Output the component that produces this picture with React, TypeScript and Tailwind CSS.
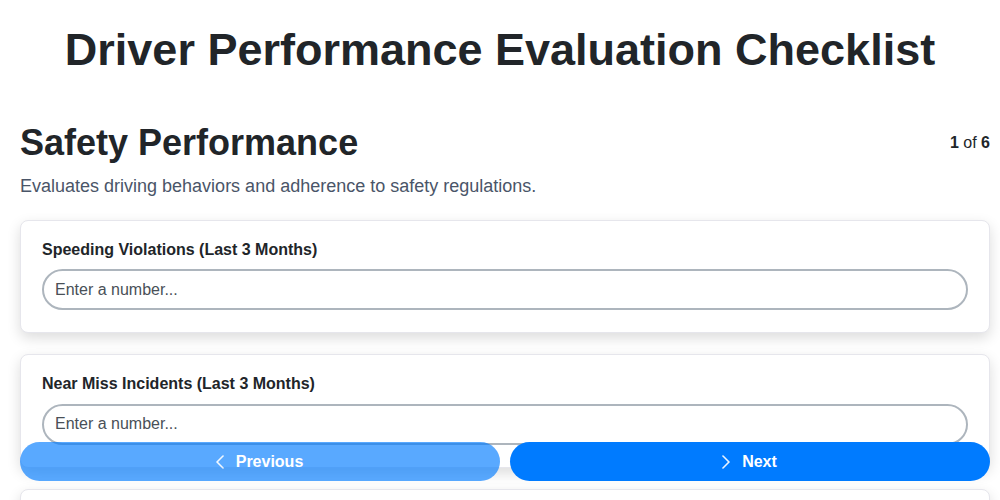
import React, { useState } from 'react';
import { BsChevronLeft, BsChevronRight } from 'react-icons/bs';

type Question = {
  id: string;
  label: string;
};

const questions: Question[] = [
  { id: 'speeding', label: 'Speeding Violations (Last 3 Months)' },
  { id: 'nearMiss', label: 'Near Miss Incidents (Last 3 Months)' },
  { id: 'harshBraking', label: 'Harsh Braking Events (Last 3 Months)' },
];

export default function App() {
  const [values, setValues] = useState<Record<string, string>>({});

  return (
    <div
      className="h-screen overflow-hidden bg-white pt-[23px] text-[#212529]"
      style={{ fontFamily: '"Liberation Sans", Arial, sans-serif' }}
    >
      <h1 className="text-center text-[45px] font-bold leading-[1.2]">
        Driver Performance Evaluation Checklist
      </h1>

      <div className="mr-[10px] ml-5">
        <div className="mt-[44px] flex items-center justify-between">
          <h2 className="text-[36px] font-bold leading-[1.2]">Safety Performance</h2>
          <span className="text-[16px]">
            <b>1</b> of <b>6</b>
          </span>
        </div>
        <p className="mt-[9px] text-[18px] leading-[1.5] text-[#4a5568]">
          Evaluates driving behaviors and adherence to safety regulations.
        </p>

        <div className="mt-[20px] flex flex-col gap-[21px]">
          {questions.map((q) => (
            <div
              key={q.id}
              className="rounded-lg border border-[#e6e6ec] bg-white px-[21px] pt-[19px] pb-[22px] shadow-[0_5px_14px_rgba(0,0,0,0.14)]"
            >
              <label htmlFor={q.id} className="mb-[10px] block text-[16px] font-bold leading-[1.2]">
                {q.label}
              </label>
              <input
                id={q.id}
                type="number"
                placeholder="Enter a number..."
                value={values[q.id] ?? ''}
                onChange={(e) => setValues({ ...values, [q.id]: e.target.value })}
                className="block h-[41px] w-full rounded-full border-2 border-[#adb5bd] bg-white px-[11px] text-[16px] text-[#212529] placeholder:text-[#495057] focus:outline-none"
              />
            </div>
          ))}
        </div>
      </div>

      <div className="fixed right-[10px] bottom-[19px] left-5 flex gap-[10px]">
        <button
          disabled
          className="flex h-[39px] flex-1 items-center justify-center gap-2 rounded-full bg-[#007bff] pr-[5px] text-[16px] font-bold text-white opacity-65"
        >
          <BsChevronLeft size={16} strokeWidth={0.6} />
          Previous
        </button>
        <button className="flex h-[39px] flex-1 items-center justify-center gap-2 rounded-full bg-[#007bff] pr-[5px] text-[16px] font-bold text-white">
          <BsChevronRight size={16} strokeWidth={0.6} />
          Next
        </button>
      </div>
    </div>
  );
}
